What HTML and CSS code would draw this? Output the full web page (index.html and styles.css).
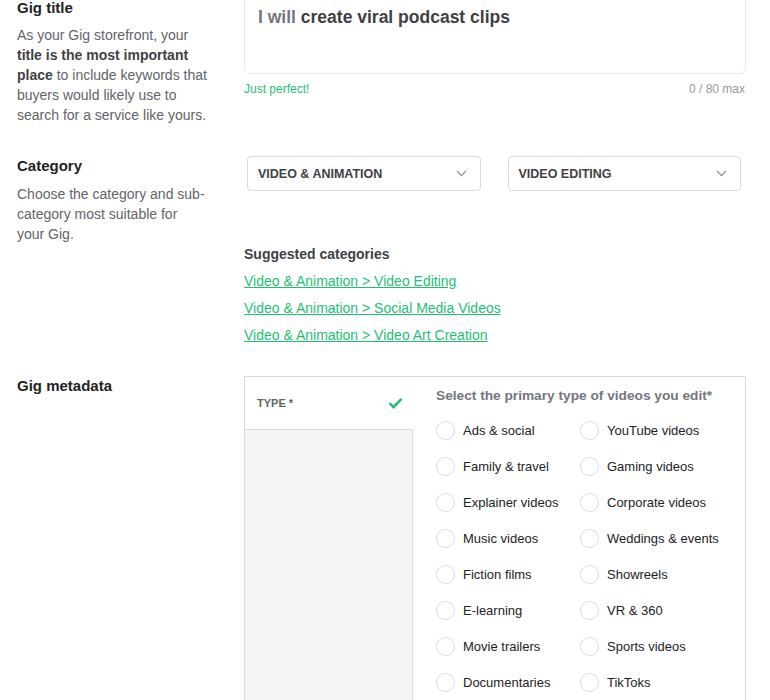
FILE: index.html
```html
<!DOCTYPE html>
<html lang="en">
<head>
    <meta charset="UTF-8">
    <meta name="viewport" content="width=device-width, initial-scale=1.0">
    <title>Gig overview</title>
    <link rel="stylesheet" href="styles.css">
</head>
<body>
    <div class="page">
        <div class="row row-title">
            <div class="info">
                <h3>Gig title</h3>
                <p>As your Gig storefront, your <b>title is the most important place</b> to include keywords that buyers would likely use to search for a service like yours.</p>
            </div>
            <div class="field">
                <div class="title-box"><span class="prefix">I will</span> create viral podcast clips</div>
                <div class="helper">
                    <span class="ok">Just perfect!</span>
                    <span class="count">0 / 80 max</span>
                </div>
            </div>
        </div>

        <div class="row row-category">
            <div class="info">
                <h3>Category</h3>
                <p>Choose the category and sub-category most suitable for your Gig.</p>
            </div>
            <div class="field">
                <div class="selects">
                    <div class="select">
                        <span>VIDEO &amp; ANIMATION</span>
                        <svg width="11" height="7" viewBox="0 0 11 7"><path d="M1 1l4.5 4.5L10 1" fill="none" stroke="#95979d" stroke-width="1.3"/></svg>
                    </div>
                    <div class="select">
                        <span>VIDEO EDITING</span>
                        <svg width="11" height="7" viewBox="0 0 11 7"><path d="M1 1l4.5 4.5L10 1" fill="none" stroke="#95979d" stroke-width="1.3"/></svg>
                    </div>
                </div>
                <div class="suggested">
                    <h4>Suggested categories</h4>
                    <a href="#">Video &amp; Animation &gt; Video Editing</a>
                    <a href="#">Video &amp; Animation &gt; Social Media Videos</a>
                    <a href="#">Video &amp; Animation &gt; Video Art Creation</a>
                </div>
            </div>
        </div>

        <div class="row row-meta">
            <div class="info">
                <h3>Gig metadata</h3>
            </div>
            <div class="meta-box">
                <div class="meta-side">
                    <div class="meta-tab">
                        <span>TYPE *</span>
                        <svg width="15" height="12" viewBox="0 0 15 12"><path d="M1.5 6.2l4 4L13.5 1.8" fill="none" stroke="#1dbf73" stroke-width="2.4"/></svg>
                    </div>
                    <div class="meta-panel"></div>
                </div>
                <div class="meta-options">
                    <h4>Select the primary type of videos you edit*</h4>
                    <div class="radios">
                        <label class="radio"><span class="dot"></span>Ads &amp; social</label>
                        <label class="radio"><span class="dot"></span>YouTube videos</label>
                        <label class="radio"><span class="dot"></span>Family &amp; travel</label>
                        <label class="radio"><span class="dot"></span>Gaming videos</label>
                        <label class="radio"><span class="dot"></span>Explainer videos</label>
                        <label class="radio"><span class="dot"></span>Corporate videos</label>
                        <label class="radio"><span class="dot"></span>Music videos</label>
                        <label class="radio"><span class="dot"></span>Weddings &amp; events</label>
                        <label class="radio"><span class="dot"></span>Fiction films</label>
                        <label class="radio"><span class="dot"></span>Showreels</label>
                        <label class="radio"><span class="dot"></span>E-learning</label>
                        <label class="radio"><span class="dot"></span>VR &amp; 360</label>
                        <label class="radio"><span class="dot"></span>Movie trailers</label>
                        <label class="radio"><span class="dot"></span>Sports videos</label>
                        <label class="radio"><span class="dot"></span>Documentaries</label>
                        <label class="radio"><span class="dot"></span>TikToks</label>
                    </div>
                </div>
            </div>
        </div>
    </div>
</body>
</html>
```

FILE: styles.css
```css
body { margin: 0; background: #fff; font-family: "Liberation Sans", Arial, sans-serif; color: #404145; overflow: hidden; }
.page { margin-top: -2px; padding-left: 17px; }
.row { display: grid; grid-template-columns: 200px 502px; column-gap: 27px; align-items: start; }
.row-category { margin-top: 31px; }
.row-meta { margin-top: 31px; }

.info h3 { margin: 0; font-size: 15px; line-height: 20px; font-weight: bold; color: #222325; }
.info p { max-width: 190px; margin: 7px 0 0; font-size: 14px; line-height: 20px; color: #62646a; }
.info p b { color: #404145; }
.row-category .info p { margin-top: 8px; }

.title-box { margin-top: -6px; height: 56px; padding: 12px 13px; border: 1px solid #e4e5e7; border-radius: 6px; font-size: 17.5px; line-height: 24px; font-weight: bold; color: #404145; }
.title-box .prefix { color: #74767e; }
.helper { display: flex; justify-content: space-between; margin-top: 7px; font-size: 12px; line-height: 16px; }
.helper .ok { color: #1dbf73; }
.helper .count { color: #95979d; padding-right: 1px; }

.selects { display: grid; grid-template-columns: 1fr 1fr; gap: 27px; padding: 0 5px 0 3px; }
.select { display: flex; align-items: center; justify-content: space-between; height: 33px; padding: 0 13px 0 10px; border: 1px solid #dadbdd; border-radius: 4px; font-size: 12.5px; font-weight: bold; color: #404145; }
.suggested { margin-top: 53px; }
.suggested h4 { margin: 0; font-size: 14px; line-height: 20px; font-weight: bold; color: #404145; }
.suggested a { display: block; margin-top: 7px; font-size: 14px; line-height: 20px; color: #1dbf73; text-decoration: underline; }

.meta-box { display: flex; border: 1px solid #dadbdd; height: 360px; }
.meta-side { width: 168px; display: flex; flex-direction: column; }
.meta-tab { height: 52px; display: flex; align-items: center; justify-content: space-between; padding: 0 10px 0 12px; font-size: 11px; font-weight: bold; color: #62646a; }
.meta-panel { flex: 1; background: #f4f4f4; border-top: 1px solid #dadbdd; border-right: 1px solid #dadbdd; }
.meta-options { padding: 9px 0 0 23px; }
.meta-options h4 { margin: 0; font-size: 13.7px; line-height: 20px; font-weight: bold; color: #74767e; }
.radios { display: grid; grid-template-columns: 144px 144px; margin-top: 6px; }
.radio { display: flex; align-items: center; height: 36px; font-size: 13px; color: #222325; }
.dot { width: 17px; height: 17px; border: 1px solid #dadbdd; border-radius: 50%; margin-right: 8px; flex: none; }
```
